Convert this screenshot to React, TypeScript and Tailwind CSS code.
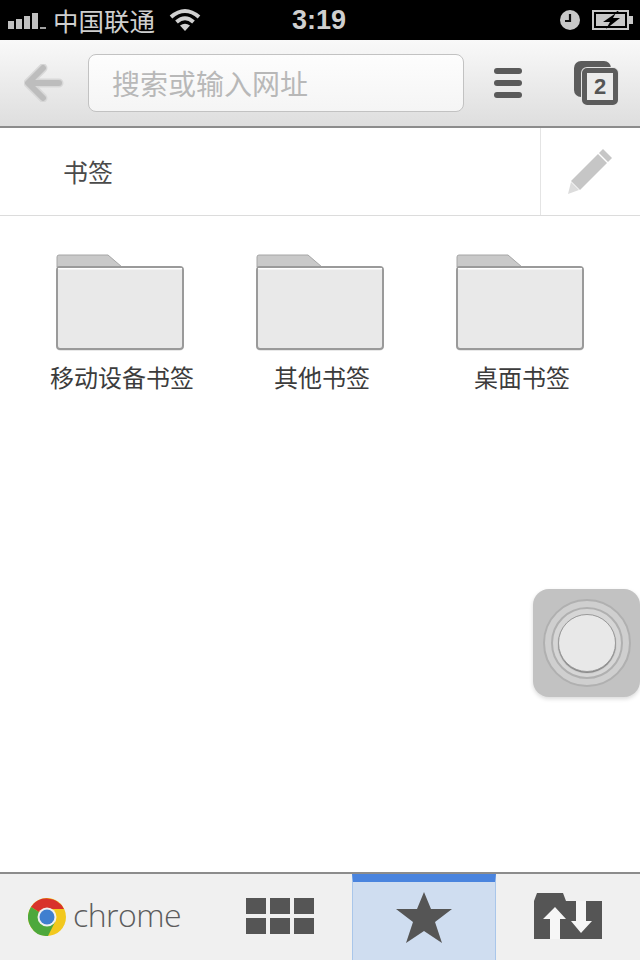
const CJK = "font-['Noto_Sans_CJK_SC','Noto_Sans',sans-serif]";

function Signal() {
  return (
    <svg width="38" height="16" viewBox="0 0 38 16">
      <rect x="0" y="8" width="6" height="8" fill="#c0c0c0" />
      <rect x="8" y="6" width="6" height="10" fill="#c0c0c0" />
      <rect x="16" y="3" width="6" height="13" fill="#c0c0c0" />
      <rect x="24" y="0" width="6" height="16" fill="#c0c0c0" />
      <rect x="32" y="14" width="6" height="2" fill="#a0a0a0" />
    </svg>
  );
}

function Wifi() {
  return (
    <svg width="32" height="24" viewBox="0 0 32 24" fill="none" stroke="#d0d0d0" strokeWidth="4">
      <path d="M2 9 Q16 -3 30 9" />
      <path d="M7.5 14 Q16 6.5 24.500 14" />
      <path d="M16 23 L11 17.500 Q16 14 21 17.500 Z" fill="#d0d0d0" stroke="none" />
    </svg>
  );
}

function Clock() {
  return (
    <svg width="20" height="20" viewBox="0 0 20 20">
      <circle cx="10" cy="10" r="10" fill="#c8c8c8" />
      <path d="M10 4 V11 H5" fill="none" stroke="#111" strokeWidth="2.200" />
    </svg>
  );
}

function Battery() {
  return (
    <svg width="42" height="20" viewBox="0 0 42 20">
      <rect x="1" y="1" width="35" height="18" fill="none" stroke="#c8c8c8" strokeWidth="2" />
      <rect x="4" y="4" width="29" height="12" fill="#c8c8c8" />
      <rect x="37" y="6" width="4" height="8" fill="#c8c8c8" />
      <path d="M27 1 L11 12 H18 L14 19 L28 8 H21 L25 1 Z" fill="#000" />
    </svg>
  );
}

function BackArrow() {
  const shape = "M19 4 L4 19 L19 34 M5 19 H35";
  return (
    <svg width="40" height="38" viewBox="0 0 40 38" fill="none" strokeLinecap="round" strokeLinejoin="round">
      <path d={shape} stroke="#d8d8d8" strokeWidth="9" />
      <path d={shape} stroke="#bdbdbd" strokeWidth="6" />
    </svg>
  );
}

function TabsIcon() {
  return (
    <div className="relative h-[44px] w-[44px]">
      <div className="absolute left-0 top-0 h-[36px] w-[37px] rounded-[7px] bg-[#5c5c5c]" />
      <div className="absolute bottom-0 right-0 flex h-[37px] w-[36px] items-center justify-center rounded-[5px] border-[5px] border-[#5c5c5c] bg-[#ebebeb] font-['Liberation_Sans',sans-serif] text-[22px] font-bold text-[#555] shadow-[0_0_0_1px_#e4e4e4]">
        2
      </div>
    </div>
  );
}

function Pencil() {
  return (
    <svg width="46" height="46" viewBox="0 0 46 46">
      <path d="M36 0 L45 9 L41 13 L32 4 Z" fill="#c6c6c6" />
      <path d="M31 5 L40 14 L13 41 L4 32 Z" fill="#c6c6c6" />
      <path d="M4 33 L12 41 L1 45 Z" fill="#dcdcdc" />
    </svg>
  );
}

function Folder({ label }: { label: string }) {
  return (
    <div className="flex flex-col items-center">
      <svg width="128" height="98" viewBox="0 0 128 98">
        <rect x="1" y="16" width="126" height="81" rx="4" fill="#d8d8d8" opacity="0.6" />
        <path d="M1 13 V3 Q1 1 3 1 H52 L66 13 Z" fill="#c9c9c9" stroke="#a6a6a6" strokeWidth="1" />
        <rect x="1" y="13" width="126" height="82" rx="3" fill="#e9e9e9" stroke="#9a9a9a" strokeWidth="2" />
        <rect x="2" y="14" width="124" height="1.500" fill="#fff" />
      </svg>
      <div className={`${CJK} mt-[9px] ml-1 text-[24px] leading-[32px] text-[#3c3c3c]`}>{label}</div>
    </div>
  );
}

function ChromeLogo() {
  return (
    <svg width="38" height="38" viewBox="0 0 38 38">
      <circle cx="19" cy="19" r="19" fill="#f2c81e" />
      <path d="M19 19 L3 9 A19 19 0 0 1 36 11 H19 Z" fill="#d8322b" />
      <path d="M19 19 L3 9 A19 19 0 0 0 20 38 L27 24 Z" fill="#4da83c" />
      <circle cx="19" cy="19" r="9.500" fill="#f0f0f0" />
      <circle cx="19" cy="19" r="7.500" fill="#3f7fcf" />
    </svg>
  );
}

function GridIcon() {
  return (
    <div className="mb-[2px] grid grid-cols-[20px_20px_20px] grid-rows-[16px_16px] gap-x-[4px] gap-y-[4px]">
      {[0, 1, 2, 3, 4, 5].map((n) => (
        <div key={n} className="bg-[#555]" />
      ))}
    </div>
  );
}

function Star() {
  return (
    <svg width="56" height="51" viewBox="0 0 56 51">
      <path d="M28 0 L35 17 H56 L39 30 L46 51 L28 39 L10 51 L17 30 L0 17 H21 Z" fill="#555" />
    </svg>
  );
}

function SyncIcon() {
  return (
    <svg width="68" height="46" viewBox="0 0 68 46">
      <path d="M0 46 V8 L3 0 H29 L32 8 H68 V46 Z" fill="#555" />
      <path d="M21 14 L9 26 H16 V46 H26 V26 H32 Z" fill="#f6f6f6" />
      <path d="M42 8 H52 V28 H58 L47 40 L37 28 H42 Z" fill="#f6f6f6" />
    </svg>
  );
}

export default function App() {
  return (
    <div className="relative flex h-[960px] w-[640px] flex-col overflow-hidden bg-white">
      <header className="relative flex h-10 items-center justify-between bg-black pl-2 pr-[6px] text-[#cfcfcf]">
        <div className="flex items-center">
          <span className="mt-[2px]">
            <Signal />
          </span>
          <span className={`${CJK} ml-[7px] text-[25.500px] leading-none`}>中国联通</span>
          <span className="ml-[14px]">
            <Wifi />
          </span>
        </div>
        <span className="absolute left-[292px] top-0 font-['Liberation_Sans',sans-serif] text-[27px] font-bold leading-[40px]">3:19</span>
        <div className="flex items-center gap-[12px]">
          <Clock />
          <Battery />
        </div>
      </header>

      <div className="flex h-[88px] items-center border-b-2 border-[#8c8c8c] bg-gradient-to-b from-[#f9f9f9] to-[#dedede]">
        <div className="ml-6">
          <BackArrow />
        </div>
        <div className={`${CJK} ml-6 flex h-[58px] w-[376px] items-center rounded-[8px] border border-[#c2c2c2] bg-gradient-to-b from-[#fdfdfd] to-[#f5f5f5] pl-[23px] text-[28px] text-[#b8b8b8]`}>
          搜索或输入网址
        </div>
        <div className="ml-[30px] flex w-[28px] flex-col gap-[6px]">
          <div className="h-[6px] rounded-[3px] bg-[#5a5a5a]" />
          <div className="h-[6px] rounded-[3px] bg-[#5a5a5a]" />
          <div className="h-[6px] rounded-[3px] bg-[#5a5a5a]" />
        </div>
        <div className="ml-[52px]">
          <TabsIcon />
        </div>
      </div>

      <div className="flex h-[88px] border-b border-[#dcdcdc]">
        <div className={`${CJK} flex flex-1 items-center pl-[63px] text-[25px] text-[#4a4a4a]`}>书签</div>
        <div className="flex w-[100px] items-center justify-center border-l border-[#e4e4e4] pr-[2px]">
          <Pencil />
        </div>
      </div>

      <main className="grid flex-1 grid-cols-3 content-start px-5 pt-[38px]">
        <Folder label="移动设备书签" />
        <Folder label="其他书签" />
        <Folder label="桌面书签" />
      </main>

      <nav className="flex h-[88px] border-t-2 border-[#8c8c8c] bg-[#f0f0f0]">
        <div className="flex w-[208px] items-center pl-7">
          <ChromeLogo />
          <span className="mb-[5px] ml-[7px] font-['Open_Sans',sans-serif] text-[32px] font-light leading-none tracking-[-0.5px] text-[#5c5c5c]">chrome</span>
        </div>
        <div className="flex w-[144px] items-center justify-center">
          <GridIcon />
        </div>
        <div className="flex w-[144px] items-center justify-center border-x border-t-[8px] border-x-[#a9c6ea] border-t-[#4a84de] bg-[#cfddf0] pb-[8px]">
          <Star />
        </div>
        <div className="flex w-[144px] items-center justify-center pb-[2px]">
          <SyncIcon />
        </div>
      </nav>

      {/* AssistiveTouch floating button */}
      <div className="absolute left-[533px] top-[589px] flex h-[108px] w-[107px] items-center justify-center rounded-[16px] bg-[#c2c2c2] shadow-[0_2px_4px_rgba(0,0,0,0.15)]">
        <div className="flex h-[88px] w-[88px] items-center justify-center rounded-full border-2 border-[#b0b0b0] bg-[#cfcfcf]">
          <div className="flex h-[72px] w-[72px] items-center justify-center rounded-full border-2 border-[#b0b0b0] bg-[#d6d6d6]">
            <div className="h-[58px] w-[58px] rounded-full border border-[#9a9a9a] bg-[#e8e8e8] shadow-[0_1px_1px_rgba(0,0,0,0.4)]" />
          </div>
        </div>
      </div>
    </div>
  );
}
